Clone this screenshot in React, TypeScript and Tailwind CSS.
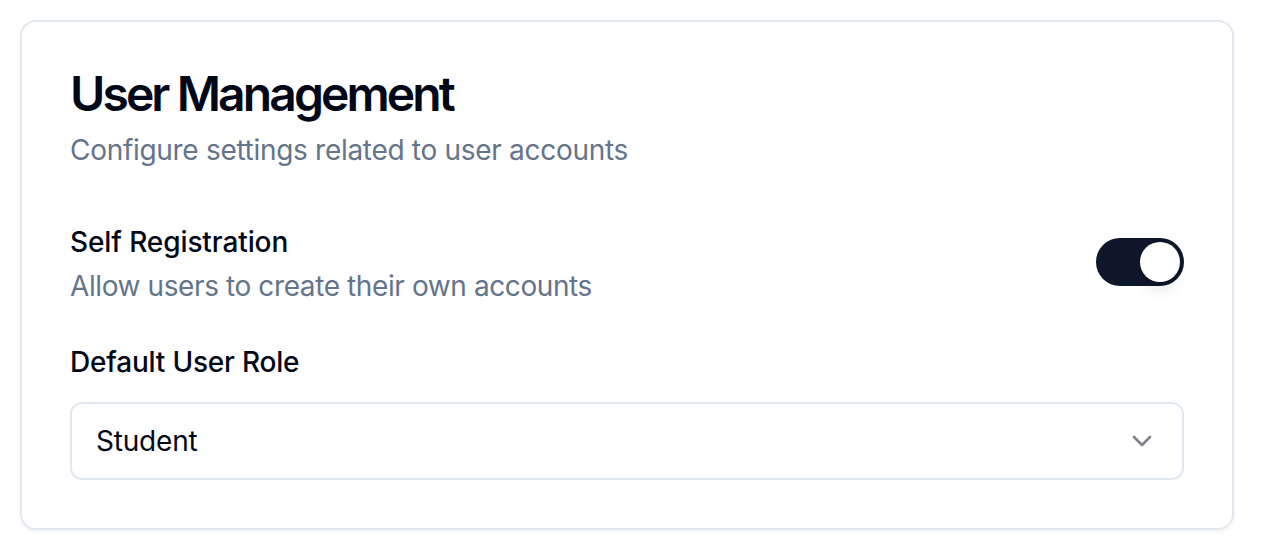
import React from "react";
import { ChevronDown } from "lucide-react";

export default function App() {
  return (
    <div className="bg-white pl-[20px] pt-[20px] min-h-[552px]" style={{ fontFamily: "Inter, 'Noto Sans', sans-serif" }}>
      <div className="w-[1214px] rounded-[16px] border-2 border-[#e2e8f0] bg-white shadow-[0_2px_4px_rgba(0,0,0,0.05)]">
        <div className="px-[48px] pt-[48px] pb-[48px]">
          <h1 className="text-[48px] leading-[48px] font-semibold tracking-[-2.9px] text-[#020817]">User Management</h1>
          <p className="mt-[12px] text-[28px] leading-[40px] tracking-[-0.3px] text-[#64748b]">Configure settings related to user accounts</p>
        </div>
        <div className="px-[48px] pb-[48px]">
          <div className="flex items-center justify-between">
            <div>
              <div className="text-[28px] leading-[48px] font-medium tracking-[-0.1px] text-[#020817]">Self Registration</div>
              <div className="text-[28px] leading-[40px] tracking-[-0.4px] text-[#64748b]">Allow users to create their own accounts</div>
            </div>
            <div className="flex h-[48px] w-[88px] items-center rounded-full border-[4px] border-transparent bg-[#0f172a]">
              <div className="h-[40px] w-[40px] translate-x-[40px] rounded-full bg-white shadow-[0_10px_15px_-3px_rgba(0,0,0,0.1),0_4px_6px_-4px_rgba(0,0,0,0.1)]" />
            </div>
          </div>
          <div className="mt-[32px]">
            <div className="text-[28px] leading-[48px] font-medium tracking-[-0.2px] text-[#020817]">Default User Role</div>
            <div className="mt-[16px] flex h-[78px] items-center justify-between rounded-[12px] border-2 border-[#e2e8f0] bg-white px-[24px]">
              <span className="text-[28px] leading-[40px] tracking-[-0.2px] text-[#020817]">Student</span>
              <ChevronDown size={32} strokeWidth={2} className="text-[#020817] opacity-50" />
            </div>
          </div>
        </div>
      </div>
    </div>
  );
}
